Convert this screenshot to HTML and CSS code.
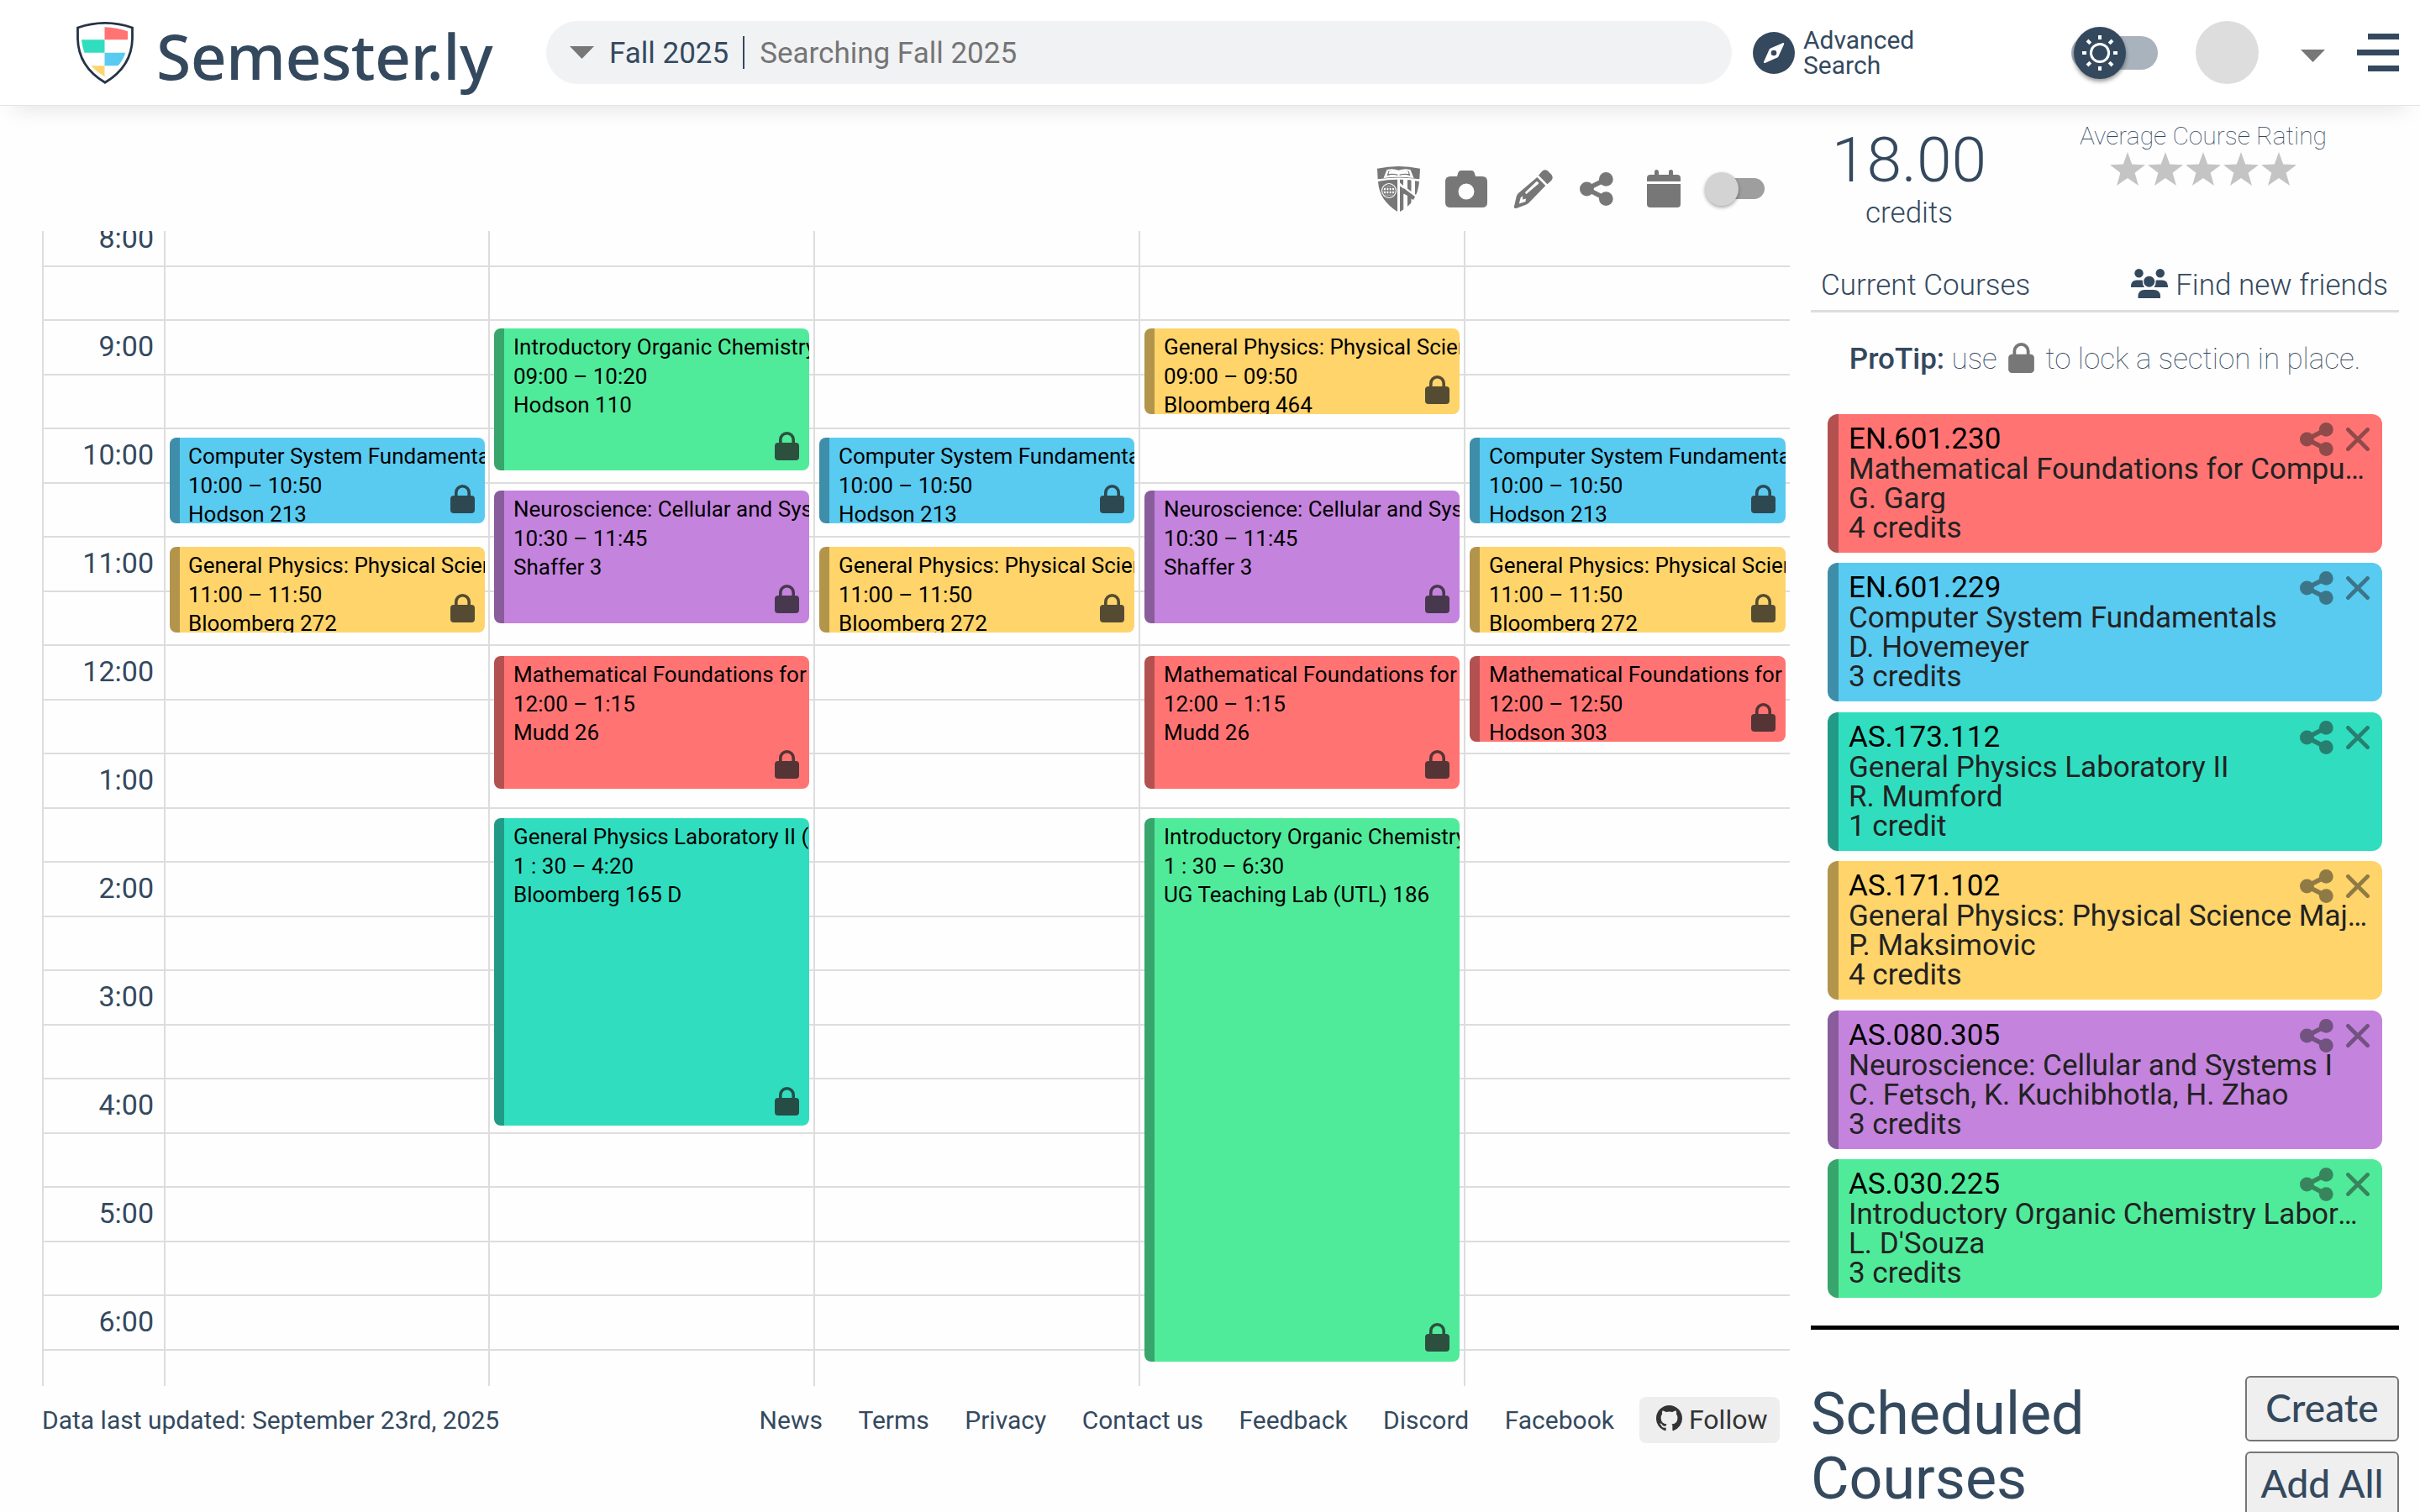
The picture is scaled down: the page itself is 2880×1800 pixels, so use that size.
FILE: index.html
```html
<!DOCTYPE html>
<html lang="en">
<head>
<meta charset="utf-8">
<title>Semester.ly</title>
<link rel="stylesheet" href="styles.css">
</head>
<body>
<svg class="defs" aria-hidden="true">
  <symbol id="lock" viewBox="0 0 29 34"><path d="M6.8 16V9.5a7.7 7.7 0 0 1 15.4 0V16" fill="none" stroke="currentColor" stroke-width="3.6"/><rect x="0" y="13" width="29" height="21" rx="4" fill="currentColor"/></symbol>
  <symbol id="share" viewBox="0 0 40 40"><path d="M31 8.5 8.5 20 31 31.5" fill="none" stroke="currentColor" stroke-width="5.4"/><circle cx="8.4" cy="20" r="8.4" fill="currentColor"/><circle cx="31.3" cy="8.4" r="8.4" fill="currentColor"/><circle cx="31.3" cy="31.6" r="8.4" fill="currentColor"/></symbol>
  <symbol id="close" viewBox="0 0 28 28"><path d="M2.4 2.4l23.2 23.2M25.6 2.4 2.4 25.6" stroke="currentColor" stroke-width="4.8" stroke-linecap="round"/></symbol>
  <symbol id="star" viewBox="0 0 42 40"><path d="M21 0l5.2 14.6L42 15.2 29.6 24.8 34 40 21 31 8 40l4.4-15.2L0 15.2l15.8-.6z" fill="currentColor"/></symbol>
  <clipPath id="stripes"><path d="M27 15.700Q39 15.800 50 18 48 43 27 54z"/></clipPath>
</svg>

<header class="header">
  <a class="brand">
    <svg class="brand-shield" viewBox="0 0 68 74">
      <path d="M33.5 6.3Q48 6.8 61 11.2V21.3H33.5z" fill="#ff7473"/>
      <path d="M6 21.3h27.5v15.4H9.4Q6.8 29.5 6 21.3z" fill="#30debf"/>
      <path d="M33.5 36.7H58.3Q55.6 45.500 49.500 52.200H33.500z" fill="#59cbf1"/>
      <path d="M17.300 52.200H33.500V65.200Q24.500 60 17.300 52.200z" fill="#fed46b"/>
      <path d="M1.500 7Q34-4.200 66.500 7V20C66 44 53 61 34 72.300 15 61 2 44 1.500 20z" fill="none" stroke="#253444" stroke-width="2.800"/>
    </svg>
    <span class="brand-name">Semester.ly</span>
  </a>
  <div class="search">
    <svg class="caret" viewBox="0 0 29 15"><path d="M0 0h29L14.500 15z" fill="#777"/></svg>
    <span class="term">Fall 2025</span>
    <span class="placeholder">Searching Fall 2025</span>
  </div>
  <a class="advanced">
    <svg class="compass" viewBox="0 0 50 50"><circle cx="25" cy="25" r="25" fill="#34495e"/><path d="M35.500 13.200c1.300-.5 2 .3 1.600 1.500L30.600 29q-.5 1-1.500 1.500L14.600 37c-1.200.4-2-.4-1.500-1.600L19.500 21q.5-1 1.500-1.500z" fill="#fff"/><circle cx="25" cy="25" r="3.300" fill="#34495e"/></svg>
    <span>Advanced<br>Search</span>
  </a>
  <div class="theme">
    <span class="theme-thumb">
      <svg viewBox="0 0 44 44" fill="none" stroke="#fff"><circle cx="22" cy="22" r="10.600" stroke-width="3"/><path stroke-width="4" d="M22 1v5M22 38v5M1 22h5M38 22h5M7 7l3.800 3.800M33.200 33.200 37 37M7 37l3.800-3.800M33.200 10.800 37 7"/></svg>
    </span>
  </div>
  <div class="avatar"></div>
  <svg class="caret caret-user" viewBox="0 0 29 15"><path d="M0 0h29L14.500 15z" fill="#777"/></svg>
  <div class="burger"><i></i><i></i><i></i></div>
</header>

<div class="page">
  <main class="main">
    <div class="toolbar">
      <svg class="t-shield" viewBox="0 0 51 54">
        <path d="M0 2.800Q25.500-2.800 51 2.800L50.300 15.300Q25.500 11.500.700 15.300z" fill="#777"/>
        <path d="M11.500 4Q19 2 25.500 4.800 32 2 39.500 4L43.500 14Q32 12.400 25.500 12.800 19 12.400 7.500 14z" fill="#fff"/>
        <path d="M13.500 5.500Q19 4 24.500 6.500V11Q18 9 11.500 11.500zM37.500 5.500Q32 4 26.500 6.500V11Q33 9 39.500 11.500z" fill="#777"/>
        <path d="M14.500 5.500Q20 4 25.500 6.500 31 4 36.500 5.500L37.500 9Q31 8 25.500 10 20 8 13.500 9z" fill="#fff"/>
        <path d="M1 18Q12 15.800 24 15.700V54C10 45 2 34 1 18z" fill="#777"/>
        <circle cx="14" cy="29" r="9" fill="#fff"/>
        <g fill="none" stroke="#777" stroke-width="1.300"><circle cx="14" cy="29" r="7.200"/><ellipse cx="14" cy="29" rx="3.500" ry="7.200"/><path d="M14 21.500v15M6.500 29h15M8 25h12M8 33h12"/></g>
        <path clip-path="url(#stripes)" fill="#777" d="M27 15h4v8l-4-3.500zM36 15h4.500v15L36 26.500zM45 15h6v19l-6-.5zM27 23.500l4.500 3.500V56H27zM27 23.500 36 30v5l-9-5zM31.500 26 45.500 36.500V42L36 35l-4.500-3zM36 34l4.500 4V56H36z"/>
        <path d="M31.500 33v20L36 49V36z" fill="#fdfdfd"/>
      </svg>
      <svg class="t-camera" viewBox="0 0 50 44"><path fill-rule="evenodd" d="M6 7h8l1.200-4Q16 0 19 0h12q3 0 3.800 3L36 7h8q6 0 6 6v25q0 6-6 6H6q-6 0-6-6V13Q0 7 6 7zM25 15.500a9.500 9.500 0 1 0 0 19 9.500 9.500 0 0 0 0-19z" fill="#777"/></svg>
      <svg class="t-pencil" viewBox="0 0 46 46"><path d="M29 6.800 33 2Q36-1.200 40 1.500L44.500 6Q47 10 44.200 13L39.500 17.300z" fill="#777"/><path fill-rule="evenodd" d="M27.300 9 37.300 19 17.500 39.500Q16 41 14 41.700L2.500 46Q-.5 46.500 0 43.500L2.800 31.500Q3.300 29.800 5 28zM26.500 14 13.500 26.500Q12.500 28 14.500 29L29 16.800Q29.500 14 26.500 14zM7.800 33 5.800 40.500 13.500 38 14 34.500 10 35.500 10.300 31.500z" fill="#777"/></svg>
      <svg class="t-share"><use href="#share"/></svg>
      <svg class="t-calendar" viewBox="0 0 40 46"><path d="M0 14V10q0-4 4-4h5V2.500a2.500 2.500 0 0 1 5 0V6h12V2.500a2.500 2.500 0 0 1 5 0V6h5q4 0 4 4v4zM0 17h40v24q0 4-4 4H4q-4 0-4-4z" fill="#777"/></svg>
      <div class="switch"><span></span></div>
    </div>

    <div class="calendar">
      <div class="hours">
        <span>8:00</span><span>9:00</span><span>10:00</span><span>11:00</span><span>12:00</span><span>1:00</span><span>2:00</span><span>3:00</span><span>4:00</span><span>5:00</span><span>6:00</span>
      </div>
      <div class="day">
        <div class="event blue" style="top:246px;height:102px"><p>Computer System Fundamentals</p><p>10:00 – 10:50</p><p>Hodson 213</p><svg><use href="#lock"/></svg></div>
        <div class="event yellow" style="top:376px;height:102px"><p>General Physics: Physical Science Major II</p><p>11:00 – 11:50</p><p>Bloomberg 272</p><svg><use href="#lock"/></svg></div>
      </div>
      <div class="day">
        <div class="event green" style="top:116px;height:169px"><p>Introductory Organic Chemistry Laboratory</p><p>09:00 – 10:20</p><p>Hodson 110</p><svg><use href="#lock"/></svg></div>
        <div class="event purple" style="top:309px;height:158px"><p>Neuroscience: Cellular and Systems I</p><p>10:30 – 11:45</p><p>Shaffer 3</p><svg><use href="#lock"/></svg></div>
        <div class="event red" style="top:506px;height:158px"><p>Mathematical Foundations for Computer Science</p><p>12:00 – 1:15</p><p>Mudd 26</p><svg><use href="#lock"/></svg></div>
        <div class="event teal" style="top:699px;height:366px"><p>General Physics Laboratory II (</p><p>1 : 30 – 4:20</p><p>Bloomberg 165 D</p><svg><use href="#lock"/></svg></div>
      </div>
      <div class="day">
        <div class="event blue" style="top:246px;height:102px"><p>Computer System Fundamentals</p><p>10:00 – 10:50</p><p>Hodson 213</p><svg><use href="#lock"/></svg></div>
        <div class="event yellow" style="top:376px;height:102px"><p>General Physics: Physical Science Major II</p><p>11:00 – 11:50</p><p>Bloomberg 272</p><svg><use href="#lock"/></svg></div>
      </div>
      <div class="day">
        <div class="event yellow" style="top:116px;height:102px"><p>General Physics: Physical Science Major II</p><p>09:00 – 09:50</p><p>Bloomberg 464</p><svg><use href="#lock"/></svg></div>
        <div class="event purple" style="top:309px;height:158px"><p>Neuroscience: Cellular and Systems I</p><p>10:30 – 11:45</p><p>Shaffer 3</p><svg><use href="#lock"/></svg></div>
        <div class="event red" style="top:506px;height:158px"><p>Mathematical Foundations for Computer Science</p><p>12:00 – 1:15</p><p>Mudd 26</p><svg><use href="#lock"/></svg></div>
        <div class="event green" style="top:699px;height:647px"><p>Introductory Organic Chemistry Laboratory</p><p>1 : 30 – 6:30</p><p>UG Teaching Lab (UTL) 186</p><svg><use href="#lock"/></svg></div>
      </div>
      <div class="day">
        <div class="event blue" style="top:246px;height:102px"><p>Computer System Fundamentals</p><p>10:00 – 10:50</p><p>Hodson 213</p><svg><use href="#lock"/></svg></div>
        <div class="event yellow" style="top:376px;height:102px"><p>General Physics: Physical Science Major II</p><p>11:00 – 11:50</p><p>Bloomberg 272</p><svg><use href="#lock"/></svg></div>
        <div class="event red" style="top:506px;height:102px"><p>Mathematical Foundations for Computer Science</p><p>12:00 – 12:50</p><p>Hodson 303</p><svg><use href="#lock"/></svg></div>
      </div>
    </div>

    <footer class="footer">
      <span class="updated">Data last updated: September 23rd, 2025</span>
      <nav class="links"><a>News</a><a>Terms</a><a>Privacy</a><a>Contact us</a><a>Feedback</a><a>Discord</a><a>Facebook</a></nav>
      <a class="follow"><svg viewBox="0 0 16 16"><path fill="#333" d="M8 0C3.580 0 0 3.580 0 8c0 3.540 2.290 6.530 5.470 7.590.4.070.55-.17.55-.38 0-.19-.01-.82-.01-1.490-2.010.37-2.530-.49-2.690-.94-.09-.23-.48-.94-.82-1.130-.28-.15-.68-.52-.01-.53.63-.01 1.080.58 1.230.82.72 1.210 1.870.87 2.330.66.07-.52.28-.87.51-1.070-1.780-.2-3.640-.89-3.640-3.950 0-.87.31-1.590.82-2.150-.08-.2-.36-1.020.08-2.120 0 0 .67-.21 2.200.82.64-.18 1.320-.27 2-.27s1.360.09 2 .27c1.530-1.040 2.200-.82 2.200-.82.44 1.100.16 1.920.08 2.120.51.56.82 1.270.82 2.150 0 3.070-1.870 3.750-3.650 3.950.29.25.54.73.54 1.480 0 1.070-.01 1.930-.01 2.200 0 .21.15.46.55.38A8.010 8.010 0 0 0 16 8c0-4.420-3.580-8-8-8z"/></svg>Follow</a>
    </footer>
  </main>

  <aside class="sidebar">
    <div class="summary">
      <div class="credits"><strong>18.00</strong><span>credits</span></div>
      <div class="rating">
        <span>Average Course Rating</span>
        <div class="stars"><svg><use href="#star"/></svg><svg><use href="#star"/></svg><svg><use href="#star"/></svg><svg><use href="#star"/></svg><svg><use href="#star"/></svg></div>
      </div>
    </div>
    <div class="heading">
      <span>Current Courses</span>
      <a class="friends"><svg viewBox="0 0 44 35" fill="#34495e"><circle cx="9.500" cy="5.200" r="5.200"/><circle cx="34.800" cy="5.200" r="5.200"/><circle cx="21.700" cy="15.200" r="6.500"/><path d="M0 22v-1.500q.5-7 7-7h5.500q1 0 1.500.5-.6 4.500 2 8zM44 22v-1.500q-.5-7-7-7h-6q-1 0-1.500.5.600 4.500-2 8zM8.500 35v-2q0-8 8-8h10.500q8 0 8 8v2z"/></svg>Find new friends</a>
    </div>
    <p class="protip"><b>ProTip:</b> use <svg><use href="#lock"/></svg> to lock a section in place.</p>
    <div class="courses">
      <article class="course red"><div class="tools"><svg class="c-share"><use href="#share"/></svg><svg class="c-close"><use href="#close"/></svg></div><h4>EN.601.230</h4><p>Mathematical Foundations for Computer Science</p><p>G. Garg</p><p>4 credits</p></article>
      <article class="course blue"><div class="tools"><svg class="c-share"><use href="#share"/></svg><svg class="c-close"><use href="#close"/></svg></div><h4>EN.601.229</h4><p>Computer System Fundamentals</p><p>D. Hovemeyer</p><p>3 credits</p></article>
      <article class="course teal"><div class="tools"><svg class="c-share"><use href="#share"/></svg><svg class="c-close"><use href="#close"/></svg></div><h4>AS.173.112</h4><p>General Physics Laboratory II</p><p>R. Mumford</p><p>1 credit</p></article>
      <article class="course yellow"><div class="tools"><svg class="c-share"><use href="#share"/></svg><svg class="c-close"><use href="#close"/></svg></div><h4>AS.171.102</h4><p>General Physics: Physical Science Major II</p><p>P. Maksimovic</p><p>4 credits</p></article>
      <article class="course purple"><div class="tools"><svg class="c-share"><use href="#share"/></svg><svg class="c-close"><use href="#close"/></svg></div><h4>AS.080.305</h4><p>Neuroscience: Cellular and Systems I</p><p>C. Fetsch, K. Kuchibhotla, H. Zhao</p><p>3 credits</p></article>
      <article class="course green"><div class="tools"><svg class="c-share"><use href="#share"/></svg><svg class="c-close"><use href="#close"/></svg></div><h4>AS.030.225</h4><p>Introductory Organic Chemistry Laboratory</p><p>L. D'Souza</p><p>3 credits</p></article>
    </div>
    <div class="scheduled">
      <h2>Scheduled Courses</h2>
      <div class="actions"><button>Create</button><button>Add All</button></div>
    </div>
  </aside>
</div>
</body>
</html>
```
FILE: styles.css
```css
* { box-sizing: border-box; margin: 0; padding: 0; }
body {
  width: 2880px;
  height: 1800px;
  overflow: hidden;
  background: #fefefe;
  color: #34495e;
  font-family: Roboto, "Liberation Sans", sans-serif;
  display: flex;
  flex-direction: column;
}
svg { display: block; flex: none; }
.defs { position: absolute; width: 0; height: 0; }

/* header */
.header {
  position: relative;
  z-index: 2;
  flex: none;
  height: 126px;
  padding: 0 25px 0 91px;
  display: flex;
  align-items: center;
  background: #fff;
  border-bottom: 1px solid #e4e4e4;
  box-shadow: 0 20px 24px -16px rgba(0, 0, 0, .1);
}
.brand { display: flex; width: 559px; flex: none; }
.brand-shield { width: 68px; height: 74px; }
.brand-name {
  margin: 3px 0 -3px 27px;
  font: 500 75px/74px "Noto Sans", sans-serif;
  letter-spacing: -.6px;
}
.search {
  flex: none;
  width: 1411px;
  height: 75px;
  padding-left: 28px;
  border-radius: 38px;
  background: #f1f2f4;
  display: flex;
  align-items: center;
  font-size: 35px;
}
.caret { width: 29px; height: 15px; }
.term { margin-left: 18px; padding-right: 17px; height: 39px; line-height: 41px; border-right: 2px solid #34495e; }
.placeholder { margin-left: 18px; line-height: 41px; padding-top: 1px; color: #757575; }
.advanced { display: flex; align-items: center; margin-left: 25px; width: 379px; flex: none; font-size: 30px; line-height: 30px; }
.compass { width: 50px; height: 50px; margin-right: 10px; }
.theme {
  flex: none;
  width: 103px;
  height: 40px;
  border-radius: 20px;
  background: #a9b3be;
  display: flex;
  align-items: center;
  padding-left: 3px;
}
.theme-thumb {
  width: 62px;
  height: 62px;
  border-radius: 50%;
  background: #34495e;
  box-shadow: 0 3px 5px rgba(0, 0, 0, .4);
  display: flex;
  align-items: center;
  justify-content: center;
}
.theme-thumb svg { width: 44px; height: 44px; }
.avatar { flex: none; width: 75px; height: 75px; border-radius: 50%; background: #ddd; margin-left: 45px; }
.caret-user { margin: 8px 38px 0 50px; }
.burger { width: 50px; height: 45px; display: flex; flex-direction: column; justify-content: space-between; align-items: flex-end; }
.burger i { width: 37px; height: 7px; background: #34495e; }
.burger i:nth-child(2) { width: 50px; }

.page { display: flex; flex: 1; min-height: 0; }

/* timetable column */
.main { width: 2155px; padding-left: 50px; flex: none; }
.toolbar { height: 149px; padding: 48px 54px 0 0; display: flex; justify-content: flex-end; align-items: center; }
.t-shield { width: 51px; height: 54px; margin-right: 30px; }
.t-camera { width: 50px; height: 44px; margin-right: 32px; }
.t-pencil { width: 46px; height: 46px; margin-right: 32px; }
.t-share { width: 40px; height: 40px; margin-right: 40px; color: #777; }
.t-calendar { width: 40px; height: 46px; margin-right: 33px; }
.switch { width: 67px; height: 25px; border-radius: 13px; margin-right: 1px; background: #9e9e9e; display: flex; align-items: center; }
.switch span { width: 40px; height: 40px; margin-left: -4px; border-radius: 50%; background: #d3d3d3; box-shadow: 0 2px 4px rgba(0, 0, 0, .35); }

.calendar {
  width: 2080px;
  height: 1375px;
  overflow: hidden;
  display: grid;
  grid-template-columns: 145px 386px repeat(4, 387px);
  background: linear-gradient(transparent 41px, #ddd 41px 43px, transparent 43px 105px, #ddd 105px 107px, transparent 107px) 0 0 / 100% 129px;
}
.hours { border-left: 2px solid #ddd; margin-top: -24px; padding-right: 12px; text-align: right; }
.hours span { display: block; height: 129px; font-size: 34px; line-height: 64px; }
.day { position: relative; border-left: 2px solid #ddd; }

.red { background: #ff7473; --bar: #b35150; }
.blue { background: #59cbf1; --bar: #3e8ea9; }
.teal { background: #30debf; --bar: #229b86; }
.yellow { background: #fed46b; --bar: #b2944b; }
.purple { background: #c483dd; --bar: #895c9b; }
.green { background: #50eb9a; --bar: #38a56c; }

.event {
  position: absolute;
  left: 5px;
  width: 375px;
  padding: 5px 0 0 10px;
  border-left: 12px solid var(--bar);
  border-radius: 8px;
  overflow: hidden;
  color: #000;
  font-size: 26px;
  line-height: 34.6px;
  white-space: nowrap;
}
.day:nth-child(n+3) .event { padding-left: 11px; }
.day:nth-child(6) .event { width: 376px; }
.event svg { position: absolute; right: 12px; bottom: 12px; width: 29px; height: 34px; color: #222; opacity: .77; }

/* footer */
.footer { display: flex; align-items: center; height: 80px; padding-right: 37px; font-size: 30px; }
.updated { margin-right: auto; }
.links { display: flex; gap: 42.5px; margin-right: 30px; }
.follow { display: flex; align-items: center; width: 167px; height: 55px; padding-left: 20px; border-radius: 8px; background: #eee; color: #333; font-size: 32px; }
.follow svg { width: 31px; height: 31px; margin-right: 8px; margin-top: -4px; }

/* sidebar */
.sidebar { width: 700px; display: flex; flex-direction: column; }
.summary { display: flex; height: 176px; flex: none; }
.credits { width: 234px; text-align: center; font-weight: 300; }
.credits strong { display: block; margin-top: 23px; font-size: 75px; line-height: 82px; font-weight: 300; }
.credits span { display: block; margin-top: 2px; font-size: 35px; line-height: 42px; }
.rating { width: 466px; padding-top: 18px; text-align: center; font-weight: 100; font-size: 30px; line-height: 35px; }
.rating > span { display: block; }
.stars { display: flex; justify-content: center; gap: 3px; margin: 2px 1px 0 0; color: #c4c4c4; }
.stars svg { width: 42px; height: 40px; }
.heading { flex: none; display: flex; justify-content: space-between; height: 70px; padding: 17px 13px 0 12px; border-bottom: 3px solid #ddd; font-weight: 300; font-size: 35px; line-height: 41px; }
.friends { display: flex; }
.friends svg { width: 44px; height: 35px; margin: 1px 9px 0 0; }
.protip { flex: none; height: 121px; padding-top: 35px; text-align: center; font-weight: 100; font-size: 35px; line-height: 42px; }
.protip b { font-weight: 500; }
.protip svg { display: inline-block; width: 31px; height: 36px; margin: 0 5px; vertical-align: -5px; color: #777; }
.courses { flex: none; padding: 0 20px; display: flex; flex-direction: column; gap: 12.4px; }
.course { position: relative; height: 165px; padding: 12px 14px 0 12px; border-left: 13px solid var(--bar); border-radius: 12px; font-size: 35px; line-height: 35px; color: #222; }
.course h4 { height: 36px; font-weight: 400; color: #000; }
.course p { overflow: hidden; white-space: nowrap; text-overflow: ellipsis; }
.tools { position: absolute; top: 10px; right: 15px; display: flex; gap: 15px; align-items: center; opacity: .5; }
.c-share { width: 40px; height: 40px; }
.c-close { width: 28px; height: 28px; }
.scheduled { flex: none; display: flex; justify-content: space-between; margin-top: 33px; border-top: 5px solid #000; padding-top: 55px; }
.scheduled h2 { width: 400px; font-size: 70px; font-weight: 400; line-height: 77px; padding-top: 7px; }
.actions { display: flex; flex-direction: column; gap: 12px; }
.actions button { width: 183px; height: 78px; border: 2px solid #767676; border-radius: 6px; background: #efefef; color: #34495e; font: 500 46px Lato, sans-serif; padding-bottom: 2px; }
```
